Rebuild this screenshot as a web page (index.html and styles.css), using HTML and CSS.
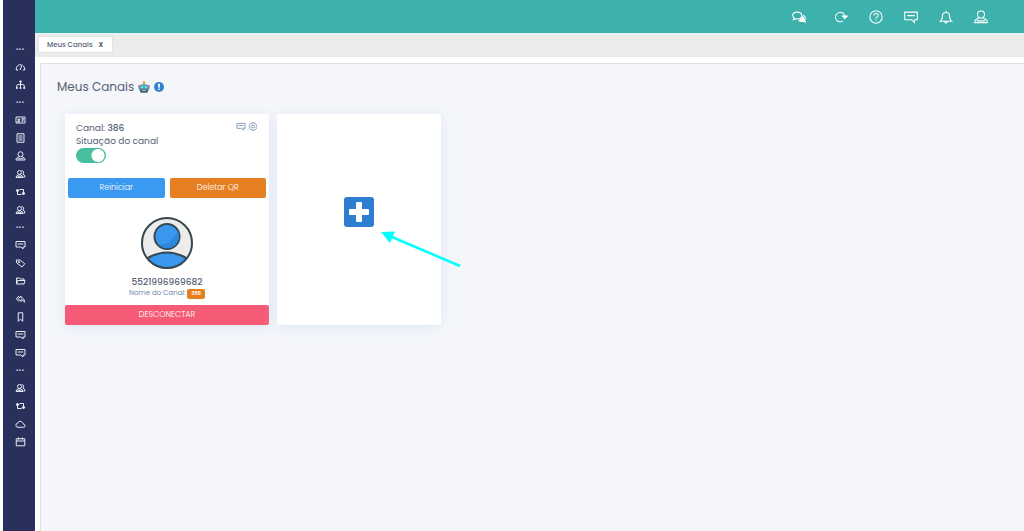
FILE: index.html
```html
<!DOCTYPE html>
<html lang="pt-br">
<head>
    <meta charset="UTF-8">
    <meta name="viewport" content="width=device-width, initial-scale=1.0">
    <title>Meus Canais</title>
    <link rel="stylesheet" href="styles.css">
</head>
<body>

<!-- Ícones reutilizados no menu, no topo e no cartão -->
<svg class="sprite" aria-hidden="true">
    <symbol id="i-gauge" viewBox="0 0 20 20"><path d="M1.500 16v-2a8.500 8.500 0 0 1 10-8.500M15 7.500a8.500 8.500 0 0 1 3.500 6.500v2M1.500 16h4M14.500 16h4M9 16l4.500-11"/></symbol>
    <symbol id="i-tree" viewBox="0 0 20 20"><path d="M10 4v12M2.500 16v-4q0-3 3-3h9q3 0 3 3v4"/><path class="solid" d="M8.500 2h3v2h-3zM1.500 15h2v2h-2zM9 15h2v2H9zM16.500 15h2v2h-2z"/></symbol>
    <symbol id="i-idcard" viewBox="0 0 20 20"><path d="M1 4h18v12H1zM4 13.500q2.500-3 5 0zM5 8h3v2.500H5zM12 7.500h5M12 10h5M12 12.500h3"/></symbol>
    <symbol id="i-doc" viewBox="0 0 20 20"><path d="M3 1.500h14v17H3zM6 6h8M6 10h8M6 14h8"/></symbol>
    <symbol id="i-user" viewBox="0 0 20 20"><circle cx="10" cy="6.500" r="5"/><path d="M7.500 11l-5 3q-1.500 1-1.500 4h18q0-3-1.500-4l-5-3M4 15.500h12"/></symbol>
    <symbol id="i-users" viewBox="0 0 20 20"><circle cx="8" cy="7" r="4"/><path d="M1 17q0-4 5-5.500h4q5 1.500 5 5.500zM12 3.500a3.500 3.500 0 0 1 2.500 6.500q4.500 1.500 4.500 6h-3M4 14.500h8"/></symbol>
    <symbol id="i-loop" viewBox="0 0 20 20"><path d="M4 7v8h8M8 5h8v8"/><path class="solid" d="M1 8l3-4 3 4zM13 12l3 4 3-4z"/></symbol>
    <symbol id="i-chat" viewBox="0 0 20 20"><path d="M1 3h18v11h-4v4l-4-4H1zM4.500 8h11"/></symbol>
    <symbol id="i-tag" viewBox="0 0 20 20"><path d="M1.500 4l8 0 9 7.500-5.500 6.500-10.500-8z"/><circle cx="7" cy="8" r="1.500"/></symbol>
    <symbol id="i-folder" viewBox="0 0 20 20"><path d="M2 16V4h6l1.500 2H17v3M2 16l2.500-7H19l-2 7z"/></symbol>
    <symbol id="i-reply" viewBox="0 0 20 20"><path d="M7 4L1.500 9.500 7 15M11 4L5.500 9.500 11 15v-3.500q5 0 7 5 0-9-7-9z"/></symbol>
    <symbol id="i-bookmark" viewBox="0 0 20 20"><path d="M5.500 1.500h9v17L10 14.500l-4.500 4z"/></symbol>
    <symbol id="i-cloud" viewBox="0 0 20 20"><path d="M5 16.500a4 4 0 0 1-.5-8 5 5 0 0 1 9.500-1 3 3 0 0 1 2 3 3 3 0 0 1 0 6z"/></symbol>
    <symbol id="i-calendar" viewBox="0 0 20 20"><path d="M1.500 3.500h17v14h-17zM1.500 8h17M6 1v4M14 1v4"/></symbol>
    <symbol id="i-talks" viewBox="0 0 20 20"><path d="M7.500 3C11 3 14 5 14 8s-3 4.800-6.500 4.800q-1 0-2-.3L2 14l1-3Q1 9.800 1 8c0-3 3-5 6.500-5z"/><path d="M16 7.500q3 1.500 3 4 0 1.500-1 2.500l1 3-3.500-1q-3 1-6-1"/><path class="solid" d="M15.500 10q-1 3-4.500 4.500l5 1.500 2 .5-.8-3z"/></symbol>
    <symbol id="i-refresh" viewBox="0 0 20 20"><path d="M13 15.500a6.800 6.800 0 1 1 2.500-7"/><path class="solid" d="M12 8.500h7L15.500 12z"/></symbol>
    <symbol id="i-help" viewBox="0 0 20 20"><circle cx="10" cy="10" r="8.800"/><path d="M7 8q0-3 3-3t3 2.500q0 1.500-1.500 2.300T10 12v.5M10 14v1.500"/></symbol>
    <symbol id="i-bell" viewBox="0 0 20 20"><path d="M2 16q3-2 3-8 0-4.500 5-4.500T15 8q0 6 3 8zM10 1v2.500M8 17q2 3 4 0"/></symbol>
    <symbol id="i-gear" viewBox="0 0 20 20"><path d="M8 1.500h4l.8 2.500 2.500-.8 2.500 3L16.500 8.500l2 1.500-2 2 1.200 2.500-2.800 2.700-2.200-.8L12 18.500H8l-.8-2.200-2.500.7-2.400-2.800L3.500 12l-2-2 2-1.800L2.300 6l2.500-2.800 2.400.8z"/><circle cx="10" cy="10" r="3.200"/></symbol>
</svg>

<div class="app">
    <nav class="sidebar" aria-label="Menu">
        <div class="section">
            <span class="dots">•••</span>
            <a href="#" aria-label="Painel"><svg><use href="#i-gauge"/></svg></a>
            <a href="#" aria-label="Fluxos"><svg><use href="#i-tree"/></svg></a>
        </div>
        <div class="section">
            <span class="dots">•••</span>
            <a href="#" aria-label="Cadastro"><svg><use href="#i-idcard"/></svg></a>
            <a href="#" aria-label="Documentos"><svg><use href="#i-doc"/></svg></a>
            <a href="#" aria-label="Usuário"><svg><use href="#i-user"/></svg></a>
            <a href="#" aria-label="Usuários"><svg><use href="#i-users"/></svg></a>
            <a href="#" aria-label="Transferências"><svg><use href="#i-loop"/></svg></a>
            <a href="#" aria-label="Equipes"><svg><use href="#i-users"/></svg></a>
        </div>
        <div class="section">
            <span class="dots">•••</span>
            <a href="#" aria-label="Mensagens"><svg><use href="#i-chat"/></svg></a>
            <a href="#" aria-label="Etiquetas"><svg><use href="#i-tag"/></svg></a>
            <a href="#" aria-label="Arquivos"><svg><use href="#i-folder"/></svg></a>
            <a href="#" aria-label="Respostas"><svg><use href="#i-reply"/></svg></a>
            <a href="#" aria-label="Favoritos"><svg><use href="#i-bookmark"/></svg></a>
            <a href="#" aria-label="Conversas"><svg><use href="#i-chat"/></svg></a>
            <a href="#" aria-label="Histórico"><svg><use href="#i-chat"/></svg></a>
        </div>
        <div class="section">
            <span class="dots">•••</span>
            <a href="#" aria-label="Contatos"><svg><use href="#i-users"/></svg></a>
            <a href="#" aria-label="Integrações"><svg><use href="#i-loop"/></svg></a>
            <a href="#" aria-label="Nuvem"><svg><use href="#i-cloud"/></svg></a>
            <a href="#" aria-label="Agenda"><svg><use href="#i-calendar"/></svg></a>
        </div>
    </nav>

    <div class="content">
        <header class="topbar">
            <button type="button" class="talks" aria-label="Conversas"><svg><use href="#i-talks"/></svg></button>
            <button type="button" aria-label="Atualizar"><svg><use href="#i-refresh"/></svg></button>
            <button type="button" aria-label="Ajuda"><svg><use href="#i-help"/></svg></button>
            <button type="button" aria-label="Mensagens"><svg><use href="#i-chat"/></svg></button>
            <button type="button" aria-label="Notificações"><svg><use href="#i-bell"/></svg></button>
            <button type="button" aria-label="Perfil"><svg><use href="#i-user"/></svg></button>
        </header>

        <div class="tabs">
            <div class="tab"><a href="#">Meus Canais</a><button type="button">x</button></div>
        </div>

        <main class="panel">
            <h1>Meus Canais
                <svg class="robot" viewBox="0 0 24 24" aria-hidden="true">
                    <circle cx="12" cy="3" r="2.500" fill="#f0a030"/>
                    <path d="M11 4h2v4h-2z" fill="#777"/>
                    <path d="M0 9h5v7H2zM24 9h-5v7h3z" fill="#a8615a"/>
                    <path d="M5 7h14l4 7-4 9H5l-4-9z" fill="#5d93a3"/>
                    <path d="M4 17h16l-2 6H6z" fill="#3f4e58"/>
                    <circle cx="8" cy="12" r="3" fill="#62e0ee"/>
                    <circle cx="16" cy="12" r="3" fill="#62e0ee"/>
                    <path d="M8 18h8v2H8z" fill="#c4d0d5"/>
                </svg>
                <svg class="info" viewBox="0 0 20 20" aria-hidden="true">
                    <circle cx="10" cy="10" r="10" fill="#2f80d0"/>
                    <path d="M8 3.500h4l-.5 8h-3zM8.500 13h3v3h-3z" fill="#fff"/>
                </svg>
            </h1>

            <div class="cards">
                <section class="card channel">
                    <div class="card-head">
                        <div>
                            <div>Canal: <b>386</b></div>
                            <label for="situacao">Situação do canal</label>
                            <input type="checkbox" id="situacao" class="switch" checked>
                        </div>
                        <div class="tools">
                            <button type="button" aria-label="Mensagem"><svg><use href="#i-chat"/></svg></button>
                            <button type="button" aria-label="Configurar"><svg><use href="#i-gear"/></svg></button>
                        </div>
                    </div>
                    <div class="actions">
                        <button type="button" class="btn blue">Reiniciar</button>
                        <button type="button" class="btn orange">Deletar QR</button>
                    </div>
                    <div class="profile">
                        <svg class="avatar" viewBox="0 0 52 52" aria-hidden="true">
                            <clipPath id="round"><circle cx="26" cy="26" r="25"/></clipPath>
                            <circle cx="26" cy="26" r="25" fill="#ececec"/>
                            <path d="M5 42q21-13 42 0v10H5z" fill="#3a97ee" stroke="#37474f" stroke-width="2" clip-path="url(#round)"/>
                            <circle cx="26" cy="19.500" r="12.500" fill="#3a97ee" stroke="#37474f" stroke-width="2"/>
                            <path d="M37 14a12 12 0 0 1-19 14q11 1 19-14z" fill="#2e86da"/>
                            <circle cx="26" cy="26" r="25" fill="none" stroke="#37474f" stroke-width="2"/>
                        </svg>
                        <div class="phone">5521996969682</div>
                        <div class="name">Nome do Canal: <span class="badge">386</span></div>
                    </div>
                    <button type="button" class="btn red">DESCONECTAR</button>
                </section>

                <section class="card add">
                    <button type="button" class="plus" aria-label="Adicionar canal">
                        <svg viewBox="0 0 30 30"><path d="M13 5h4q1 0 1 1v6h6q1 0 1 1v4q0 1-1 1h-6v6q0 1-1 1h-4q-1 0-1-1v-6H6q-1 0-1-1v-4q0-1 1-1h6V6q0-1 1-1z"/></svg>
                    </button>
                    <svg class="arrow" viewBox="0 0 82 38" aria-hidden="true">
                        <path d="M12 6L80 35" stroke="#00ffff" stroke-width="2.500"/>
                        <path d="M1 1l14-.5-5 11.500z" fill="#00ffff"/>
                    </svg>
                </section>
            </div>
        </main>
    </div>
</div>

</body>
</html>
```

FILE: styles.css
```css
* {
    box-sizing: border-box;
}

body {
    margin: 0;
    font-family: Poppins, Inter, "Open Sans", sans-serif;
    font-size: 9px;
    color: #566173;
    background: #fff;
}

button {
    border: 0;
    padding: 0;
    background: none;
    font: inherit;
    color: inherit;
    cursor: pointer;
}

a {
    color: inherit;
    text-decoration: none;
}

svg {
    display: block;
    fill: none;
    stroke: currentColor;
    stroke-width: 2;
}

.sprite {
    position: absolute;
    width: 0;
    height: 0;
}

.solid {
    fill: currentColor;
}

.app {
    display: flex;
    min-height: 100vh;
    padding-left: 3px;
}

/* menu lateral */
.sidebar {
    width: 32px;
    flex: none;
    padding: 42px 0 0 2px;
    background: #28305b;
    color: #e8ebf5;
}

.section {
    padding-bottom: 1px;
}

.section a,
.dots {
    display: flex;
    align-items: center;
    justify-content: center;
    height: 18px;
}

.section svg {
    width: 11px;
    height: 10px;
}

.section .dots {
    height: 16px;
    font-size: 7px;
    color: #bfc4d8;
}

.content {
    flex: 1;
    min-width: 0;
    display: flex;
    flex-direction: column;
}

/* barra do topo */
.topbar {
    display: flex;
    justify-content: flex-end;
    align-items: center;
    gap: 21px;
    height: 33px;
    padding-right: 36px;
    background: #3db1ab;
    color: #fff;
}

.topbar svg {
    width: 14px;
    height: 14px;
    stroke-width: 1.500;
}

.topbar .talks {
    margin-right: 7px;
}

.tabs {
    height: 24px;
    padding: 2px 3px;
    background: #ececec;
    border-top: 1px solid #eef2f8;
}

.tab {
    display: inline-flex;
    align-items: center;
    gap: 6px;
    height: 17px;
    padding: 0 9px 0 8px;
    background: #fff;
    border: 1px solid #e0e2e6;
    font-size: 7px;
    font-weight: 500;
}

.tab button {
    font-size: 8px;
    font-weight: 600;
}

.panel {
    flex: 1;
    margin: 6px 0 0 5px;
    padding: 14px 16px;
    background: #f4f6fa;
    border: solid #dfe1e5;
    border-width: 1px 0 0 1px;
    border-radius: 2px 0 0 0;
}

h1 {
    display: flex;
    align-items: center;
    gap: 4px;
    margin: 0 0 18px;
    font-size: 12px;
    line-height: 18px;
    font-weight: 400;
}

h1 svg {
    stroke: none;
}

.robot {
    width: 12px;
    height: 12px;
}

.info {
    width: 10px;
    height: 10px;
}

/* cartões */
.cards {
    display: flex;
    flex-wrap: wrap;
    gap: 8px;
    padding-left: 8px;
}

.card {
    background: #fff;
    border-radius: 2px;
    box-shadow: 0 2px 12px #dfe6f4;
}

.channel {
    width: 204px;
}

.card-head {
    display: flex;
    justify-content: space-between;
    padding: 8px 11px 0;
    font-size: 9px;
    line-height: 13px;
}

.card-head b {
    font-weight: 500;
}

.card-head label {
    display: block;
}

.switch {
    appearance: none;
    display: block;
    width: 30px;
    height: 15px;
    margin: 0;
    border-radius: 8px;
    background: radial-gradient(circle at 22px 50%, #fff 6px, #45bf9e 7px);
}

.tools {
    display: flex;
    align-items: flex-start;
    gap: 2px;
    color: #7d92b5;
}

.tools svg {
    width: 10px;
    height: 9px;
}

.actions {
    display: flex;
    gap: 5px;
    padding: 15px 3px 0;
}

.btn {
    flex: 1;
    height: 20px;
    border-radius: 2px;
    color: #fff;
    font-size: 8px;
    font-weight: 300;
}

.blue {
    background: #3a99f0;
}

.orange {
    background: #e67e22;
}

.red {
    display: block;
    width: 100%;
    background: #f55b76;
}

.profile {
    padding: 19px 0 6px;
    text-align: center;
}

.avatar {
    width: 52px;
    height: 52px;
    margin: 0 auto 7px;
    stroke: none;
}

.phone {
    font-size: 9px;
    font-weight: 500;
    line-height: 12px;
}

.name {
    font-size: 7px;
    line-height: 10px;
    color: #7088a8;
}

.badge {
    display: inline-block;
    padding: 0 4px;
    border-radius: 2px;
    background: #e67e22;
    color: #fff;
    font-size: 5px;
    font-weight: 600;
}

.add {
    position: relative;
    display: flex;
    align-items: center;
    justify-content: center;
    width: 164px;
}

.plus {
    width: 30px;
    height: 30px;
    margin-bottom: 16px;
    border-radius: 3px;
    background: #2f7dd1;
}

.plus svg {
    fill: #fff;
    stroke: none;
}

/* seta que aponta para o botão de adicionar */
.arrow {
    position: absolute;
    top: 117px;
    left: 103px;
    width: 82px;
    height: 38px;
    stroke: none;
}
```
